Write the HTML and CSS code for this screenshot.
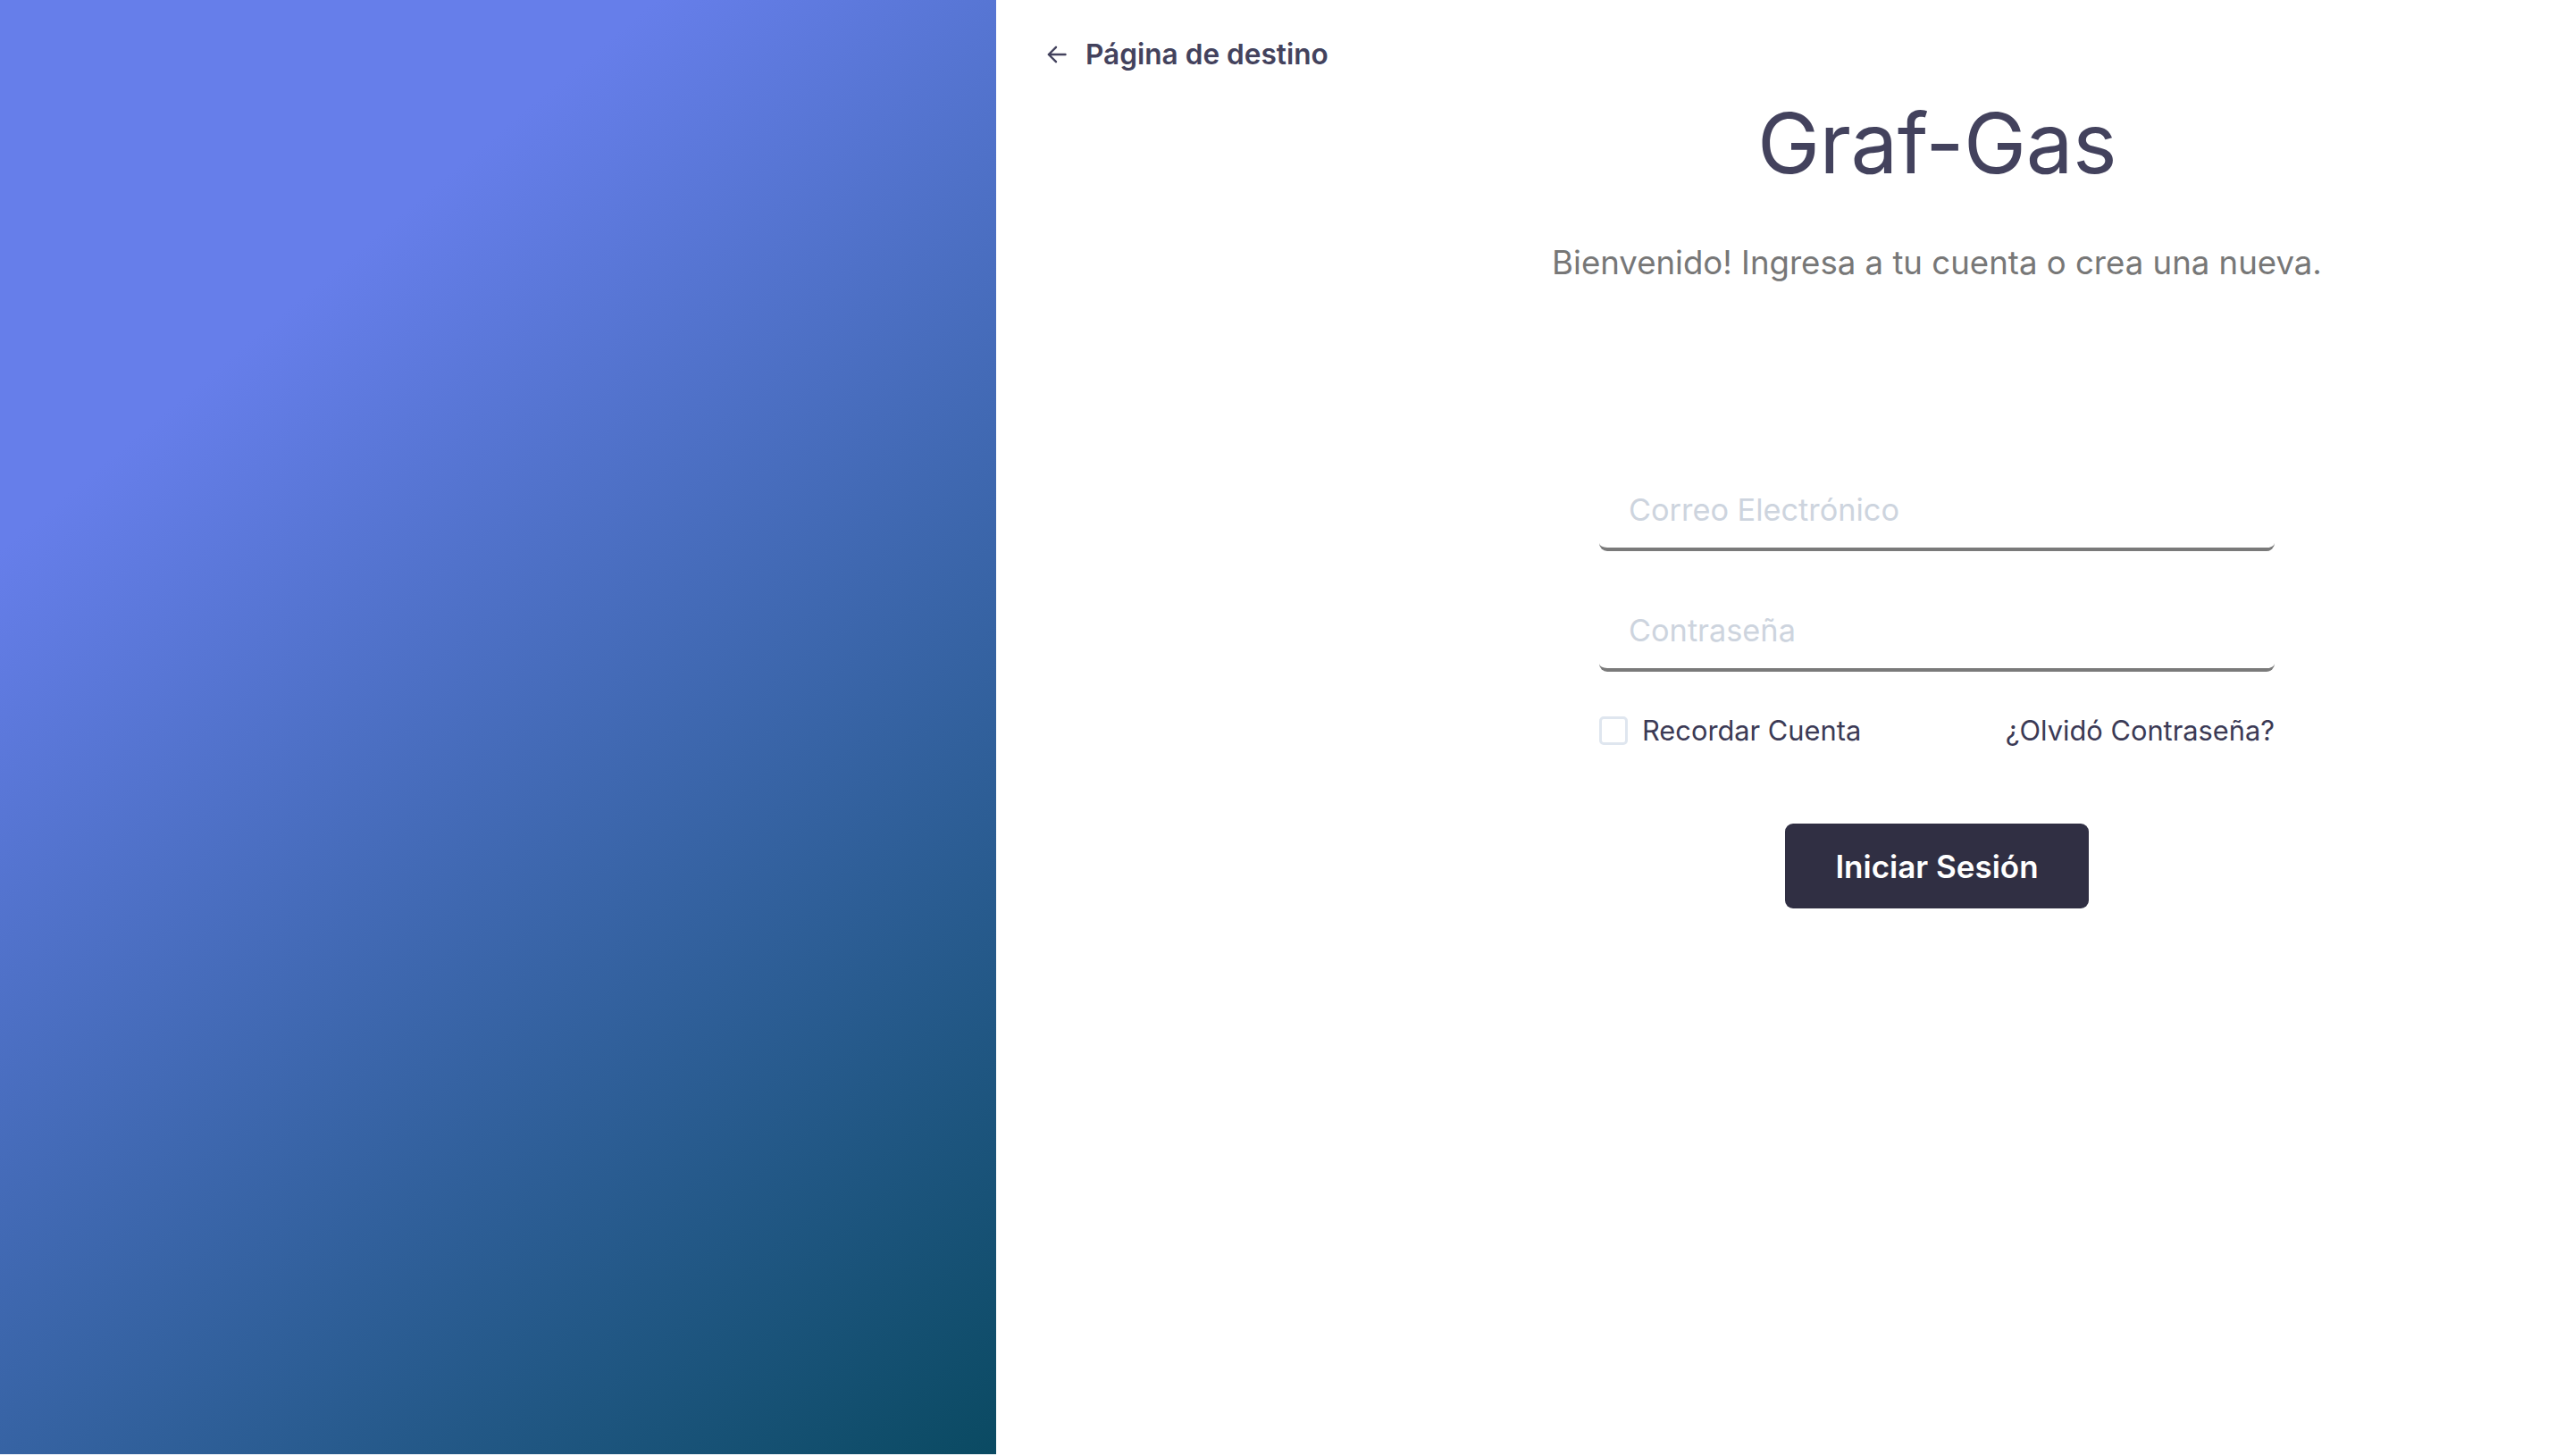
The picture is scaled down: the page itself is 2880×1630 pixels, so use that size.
FILE: index.html
```
<!DOCTYPE html>
<html lang="es">
<head>
<meta charset="utf-8">
<title>Graf-Gas</title>
<link rel="stylesheet" href="styles.css">
</head>
<body>
<div class="page">
  <aside class="hero"></aside>
  <main class="main">
    <a class="back" href="#">
      <svg class="back-icon" width="22" height="20" viewBox="0 0 22 20" fill="none" stroke="currentColor" stroke-width="2.4" stroke-linecap="round" stroke-linejoin="round"><path d="M20.5 10H1.8M10 1.8L1.8 10L10 18.2"/></svg>
      <span>Página de destino</span>
    </a>
    <section class="content">
      <h1 class="title">Graf-Gas</h1>
      <p class="subtitle">Bienvenido! Ingresa a tu cuenta o crea una nueva.</p>
      <form class="form">
        <input class="field field-email" type="email" placeholder="Correo Electrónico">
        <input class="field field-pass" type="password" placeholder="Contraseña">
        <div class="options">
          <label class="remember"><input class="check" type="checkbox"><span>Recordar Cuenta</span></label>
          <a class="forgot" href="#">¿Olvidó Contraseña?</a>
        </div>
        <button class="submit" type="button">Iniciar Sesión</button>
      </form>
    </section>
  </main>
</div>
</body>
</html>
```
FILE: styles.css
```
* { box-sizing: border-box; }
html, body { margin: 0; padding: 0; }
body {
  font-family: Inter, "Noto Sans", "Liberation Sans", sans-serif;
  background: #ffffff;
  color: #43425d;
}
.page {
  display: flex;
  width: 2880px;
  height: 1630px;
  overflow: hidden;
}
.hero {
  flex: 0 0 1115px;
  height: 1628px;
  background: linear-gradient(140deg, #667eea 0%, #667eea 24%, #0a4a62 100%);
}
.main {
  flex: 1;
  display: flex;
  flex-direction: column;
  padding-top: 41px;
}
.back {
  display: flex;
  align-items: center;
  gap: 21px;
  margin-left: 57px;
  align-self: flex-start;
  font-size: 31.6px;
  line-height: 40px;
  font-weight: 600;
  color: #43425d;
  text-decoration: none;
}
.back-icon { display: block; }
.content {
  display: flex;
  flex-direction: column;
  align-items: center;
  padding-left: 341px;
}
.title {
  margin: 19px 0 0;
  font-size: 94px;
  line-height: 120px;
  font-weight: 400;
  color: #43425d;
  letter-spacing: -0.5px;
}
.subtitle {
  margin: 52px 0 0;
  font-size: 36.6px;
  line-height: 44px;
  color: #777777;
}
.form {
  width: 756px;
  margin-top: 211px;
  display: flex;
  flex-direction: column;
  align-items: center;
}
.field {
  display: block;
  width: 100%;
  height: 90px;
  padding: 0 33px;
  border: none;
  border-bottom: 4px solid #7a7a7a;
  border-radius: 9px;
  background: #ffffff;
  font-family: inherit;
  font-size: 34.3px;
  color: #43425d;
  outline: none;
}
.field::placeholder { color: #cdd4de; }
.field-pass { margin-top: 45px; }
.options {
  width: 100%;
  margin-top: 46px;
  display: flex;
  align-items: center;
  justify-content: space-between;
  font-size: 30.8px;
  line-height: 40px;
  color: #3b3a55;
}
.remember {
  display: flex;
  align-items: center;
  gap: 16px;
}
.check {
  appearance: none;
  -webkit-appearance: none;
  margin: 0;
  width: 32px;
  height: 32px;
  border: 3px solid #dfe6ef;
  border-radius: 5px;
  background: #ffffff;
}
.forgot {
  color: #3b3a55;
  text-decoration: none;
}
.submit {
  margin-top: 84px;
  width: 340px;
  height: 95px;
  border: none;
  border-radius: 9px;
  background: #302f43;
  color: #ffffff;
  font-family: inherit;
  font-size: 35px;
  font-weight: 600;
}
```
